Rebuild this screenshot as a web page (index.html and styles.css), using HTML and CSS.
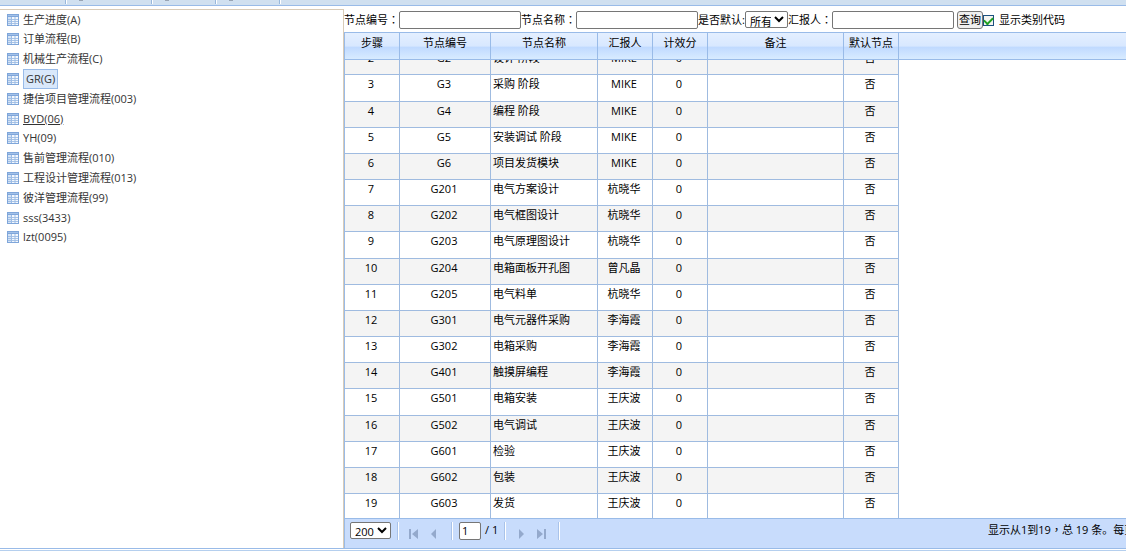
FILE: index.html
```html
<!DOCTYPE html>
<html lang="zh-CN">
<head>
<meta charset="utf-8">
<title>节点管理</title>
<link rel="stylesheet" href="styles.css">
</head>
<body>
<svg class="defs" aria-hidden="true">
  <symbol id="grid" viewBox="0 0 12 12">
    <rect width="12" height="12" fill="#7fa6da"/>
    <rect x="1" y="1" width="10" height="1" fill="#a3c1e8"/>
    <path d="M1 3h3v8H1z" fill="#d3e3f6"/>
    <path d="M4 3h4v8H4zM8 3h3v8H8z" fill="#f4f8fd"/>
    <path d="M1 5.5h10M1 7.5h10M1 9.5h10" stroke="#94b5e0" stroke-width=".8"/>
    <path d="M4.5 3v8M8 3v8" stroke="#9dbde6"/>
  </symbol>
</svg>
<div class="app">
  <div class="toolbar"><i class="sep"></i><i class="dot wide"></i><i class="sep"></i><i class="dot"></i><i class="sep"></i><i class="dot"></i><i class="sep"></i></div>
  <div class="main">
    <nav class="sidebar">
      <ul class="tree">
        <li><svg class="icon"><use href="#grid"/></svg><a href="#">生产进度(A)</a></li>
        <li><svg class="icon"><use href="#grid"/></svg><a href="#">订单流程(B)</a></li>
        <li><svg class="icon"><use href="#grid"/></svg><a href="#">机械生产流程(C)</a></li>
        <li><svg class="icon"><use href="#grid"/></svg><a href="#" class="selected">GR(G)</a></li>
        <li><svg class="icon"><use href="#grid"/></svg><a href="#">捷信项目管理流程(003)</a></li>
        <li><svg class="icon"><use href="#grid"/></svg><a href="#" class="hovered">BYD(06)</a></li>
        <li><svg class="icon"><use href="#grid"/></svg><a href="#">YH(09)</a></li>
        <li><svg class="icon"><use href="#grid"/></svg><a href="#">售前管理流程(010)</a></li>
        <li><svg class="icon"><use href="#grid"/></svg><a href="#">工程设计管理流程(013)</a></li>
        <li><svg class="icon"><use href="#grid"/></svg><a href="#">彼洋管理流程(99)</a></li>
        <li><svg class="icon"><use href="#grid"/></svg><a href="#">sss(3433)</a></li>
        <li><svg class="icon"><use href="#grid"/></svg><a href="#">lzt(0095)</a></li>
      </ul>
    </nav>
    <section class="content">
      <form class="search">
        <label for="code">节点编号<span class="punct" lang="zh-TW">：</span></label><input class="text" id="code" type="text">
        <label for="name">节点名称<span class="punct" lang="zh-TW">：</span></label><input class="text" id="name" type="text">
        <label for="def">是否默认:</label><select id="def"><option>所有</option></select>
        <label for="rep">汇报人<span class="punct" lang="zh-TW">：</span></label><input class="text" id="rep" type="text">
        <button type="button">查询</button>
        <input class="check" id="show" type="checkbox" checked><label class="show" for="show">显示类别代码</label>
      </form>
      <div class="head">
        <table>
          <colgroup><col class="w-s"><col class="w-m"><col class="w-l"><col class="w-s"><col class="w-s"><col class="w-xl"><col class="w-s"></colgroup>
          <thead><tr><th>步骤</th><th>节点编号</th><th>节点名称</th><th>汇报人</th><th>计效分</th><th>备注</th><th>默认节点</th></tr></thead>
        </table>
      </div>
      <div class="body">
        <table>
          <colgroup><col class="w-s"><col class="w-m"><col class="w-l"><col class="w-s"><col class="w-s"><col class="w-xl"><col class="w-s"></colgroup>
          <tbody>
            <tr><td>2</td><td>G2</td><td>设计 阶段</td><td>MIKE</td><td>0</td><td></td><td>否</td></tr>
            <tr><td>3</td><td>G3</td><td>采购 阶段</td><td>MIKE</td><td>0</td><td></td><td>否</td></tr>
            <tr><td>4</td><td>G4</td><td>编程 阶段</td><td>MIKE</td><td>0</td><td></td><td>否</td></tr>
            <tr><td>5</td><td>G5</td><td>安装调试 阶段</td><td>MIKE</td><td>0</td><td></td><td>否</td></tr>
            <tr><td>6</td><td>G6</td><td>项目发货模块</td><td>MIKE</td><td>0</td><td></td><td>否</td></tr>
            <tr><td>7</td><td>G201</td><td>电气方案设计</td><td>杭晓华</td><td>0</td><td></td><td>否</td></tr>
            <tr><td>8</td><td>G202</td><td>电气框图设计</td><td>杭晓华</td><td>0</td><td></td><td>否</td></tr>
            <tr><td>9</td><td>G203</td><td>电气原理图设计</td><td>杭晓华</td><td>0</td><td></td><td>否</td></tr>
            <tr><td>10</td><td>G204</td><td>电箱面板开孔图</td><td>曾凡晶</td><td>0</td><td></td><td>否</td></tr>
            <tr><td>11</td><td>G205</td><td>电气料单</td><td>杭晓华</td><td>0</td><td></td><td>否</td></tr>
            <tr><td>12</td><td>G301</td><td>电气元器件采购</td><td>李海霞</td><td>0</td><td></td><td>否</td></tr>
            <tr><td>13</td><td>G302</td><td>电箱采购</td><td>李海霞</td><td>0</td><td></td><td>否</td></tr>
            <tr><td>14</td><td>G401</td><td>触摸屏编程</td><td>李海霞</td><td>0</td><td></td><td>否</td></tr>
            <tr><td>15</td><td>G501</td><td>电箱安装</td><td>王庆波</td><td>0</td><td></td><td>否</td></tr>
            <tr><td>16</td><td>G502</td><td>电气调试</td><td>王庆波</td><td>0</td><td></td><td>否</td></tr>
            <tr><td>17</td><td>G601</td><td>检验</td><td>王庆波</td><td>0</td><td></td><td>否</td></tr>
            <tr><td>18</td><td>G602</td><td>包装</td><td>王庆波</td><td>0</td><td></td><td>否</td></tr>
            <tr><td>19</td><td>G603</td><td>发货</td><td>王庆波</td><td>0</td><td></td><td>否</td></tr>
          </tbody>
        </table>
      </div>
      <footer class="pager">
        <select class="size" aria-label="每页条数"><option>200</option></select>
        <i class="bar"></i>
        <button class="nav" type="button" aria-label="首页"><svg viewBox="0 0 12 12"><path d="M1 1h2v10H1zM10 1v10L4 6z"/></svg></button>
        <button class="nav" type="button" aria-label="上一页"><svg viewBox="0 0 12 12"><path d="M8 1v10L3 6z"/></svg></button>
        <i class="bar"></i>
        <input class="text page" type="text" value="1" aria-label="页码"><span>/ 1</span>
        <i class="bar"></i>
        <button class="nav" type="button" aria-label="下一页"><svg viewBox="0 0 12 12"><path d="M4 1v10l5-5z"/></svg></button>
        <button class="nav" type="button" aria-label="末页"><svg viewBox="0 0 12 12"><path d="M9 1h2v10H9zM2 1v10l6-5z"/></svg></button>
        <i class="bar"></i>
        <div class="status">显示从1到19<span class="punct" lang="zh-TW">，</span>总 19 条。每页显示：200条</div>
      </footer>
    </section>
  </div>
</div>
</body>
</html>
```
FILE: styles.css
```css
* { box-sizing: border-box; }
body { margin: 0; color: #000; }
body, input, select, button { font: 11px/16px "Open Sans", "Noto Sans CJK SC", sans-serif; }
.punct { font-family: "Noto Sans CJK TC", sans-serif; line-height: 1; }
.defs { position: absolute; width: 0; height: 0; }
.app { display: flex; flex-direction: column; height: 100vh; overflow: hidden; border-bottom: 1px solid #b5cfee; }
.toolbar { flex: none; display: flex; align-items: flex-start; height: 6px; padding-left: 65px; background: #d0e0f0; border-bottom: 1px solid #99bbe8; }
.sep { width: 2px; height: 4px; background: #98b8dc; border-right: 1px solid #fff; }
.dot { width: 4px; height: 1px; margin: 0 46px 0 12px; background: #98a4b4; }
.dot.wide { margin-right: 68px; }
.main { flex: 1; display: flex; min-height: 0; margin-bottom: 1px; padding-top: 3px; border-bottom: 1px solid #99bbe8; }
.sidebar { flex: none; width: 344px; border: 1px solid #d8cbb8; border-width: 1px 1px 0 0; }
.tree { margin: 0; padding: 0; list-style: none; }
.tree li { display: flex; align-items: center; height: 20px; padding-left: 7px; gap: 4px; }
.tree li:nth-child(5n+1) { height: 19px; }
.icon { width: 12px; height: 12px; }
.tree a { color: #333; text-decoration: none; }
.tree .hovered { text-decoration: underline; }
.tree .selected { padding: 1px 2px; background: #d9e8fb; border: 1px solid #99bbe8; }
.content { flex: 1; min-width: 0; display: flex; flex-direction: column; }
.search { flex: none; display: flex; align-items: center; height: 23px; padding-bottom: 2px; white-space: nowrap; }
.text { height: 18px; width: 122px; padding: 0 2px; border: 1px solid #767676; border-radius: 2px; background: #fff; }
select { height: 17px; padding: 0; border: 1px solid #767676; border-radius: 2px; background: #fff; color: #000; }
.search select { width: 43px; font-family: "Noto Sans CJK SC", sans-serif; }
.search button { height: 18px; margin-left: 3px; padding: 0 1px; border: 1px solid #767676; border-radius: 3px; background: #efefef; }
.check { appearance: none; flex: none; display: grid; place-items: center; width: 11px; height: 11px; margin: 2px 0 0; border: 1px solid #1c5180; background: #f4f4f0; }
.check:checked::before { content: ""; width: 7px; height: 4px; margin-bottom: 2px; border: solid #21a121; border-width: 0 0 2px 2px; transform: rotate(-45deg); }
.show { margin-left: 5px; }
.head { flex: none; height: 28px; border: 1px solid #99bbe8; border-right: 0; background: linear-gradient(#e4efff, #d8e8ff 50%, #c0daff 55%, #d8ebff); }
.head table, .body table { width: 554px; table-layout: fixed; border-collapse: separate; border-spacing: 0; }
.w-s { width: 55px; }
.w-m { width: 91px; }
.w-l { width: 107px; }
.w-xl { width: 136px; }
th { height: 26px; padding: 2px 0 0; vertical-align: top; font-weight: normal; border-right: 1px solid #99bbe8; }
.body { flex: 1; min-height: 0; display: flex; flex-direction: column; justify-content: flex-end; overflow: hidden; border-left: 1px solid #99bbe8; }
.body table { flex: none; }
td { height: 26px; padding: 1px 4px 0 2px; vertical-align: top; text-align: center; border-right: 1px solid #9fbbe0; border-top: 1px solid #9fbbe0; }
td:nth-child(3) { text-align: left; }
.body tr:nth-child(6n+2) td { height: 27px; }
.body tr:last-child td { height: 25px; }
.body tr:nth-child(odd) { background: #f4f4f4; }
.pager { flex: none; display: flex; align-items: flex-start; height: 30px; padding: 3px 0 0 5px; border: 1px solid #99bbe8; border-width: 1px 0 0 1px; background: #c8dcfc; }
.size { width: 41px; font-family: "Open Sans", sans-serif; }
.bar { width: 2px; height: 18px; margin: 0 6px; background: #a9c3ea; border-right: 1px solid #fff; }
.nav { width: 20px; height: 18px; padding: 6px 5px 0 3px; border: 0; background: none; }
.nav svg { display: block; width: 12px; height: 12px; fill: #94a9cc; }
.page { width: 22px; margin-right: 4px; padding-bottom: 1px; }
.status { width: 138px; margin-left: auto; overflow: hidden; white-space: nowrap; }
```
